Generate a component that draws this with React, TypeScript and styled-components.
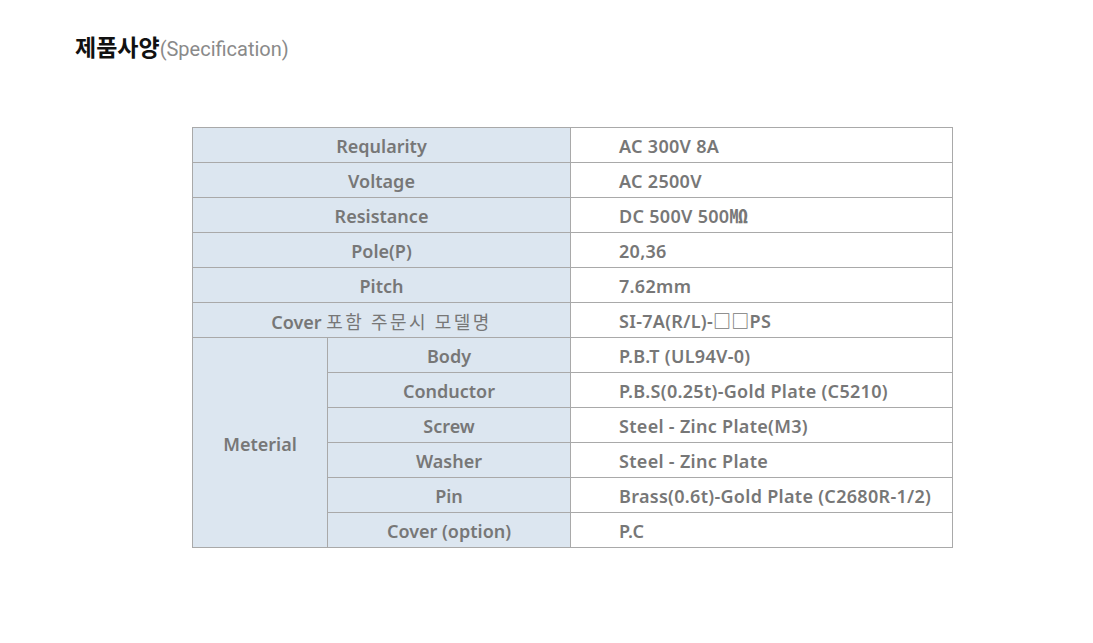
import React from "react";
import styled, { createGlobalStyle } from "styled-components";

const Global = createGlobalStyle`
  html, body { margin: 0; padding: 0; background: #fff; }
  body { font-family: "Noto Sans", "Noto Sans CJK KR", sans-serif; }
`;

const Page = styled.div`
  padding: 31px 0 0 75px;
`;

const Title = styled.h2`
  margin: 0;
  font-size: 23px;
  font-weight: 700;
  color: #111;
  font-family: "Noto Sans CJK KR", sans-serif;
  line-height: 30px;
`;

const Sub = styled.span`
  font-size: 20px;
  font-weight: 400;
  color: #8a8a8a;
  font-family: "Roboto", "Noto Sans", sans-serif;
`;

const Table = styled.table`
  margin: 63px 0 0 117px;
  border-collapse: collapse;
  width: 761px;
  table-layout: fixed;
  font-size: 18px;
  font-weight: 600;
  color: #777;
`;

const Cell = styled.td<{ $head?: boolean }>`
  height: 32px;
  padding: 2px 0 0 ${(p) => (p.$head ? "0" : "48px")};
  border: 1px solid #a9a9a9;
  background: ${(p) => (p.$head ? "#dce6f0" : "#fff")};
  text-align: ${(p) => (p.$head ? "center" : "left")};
  letter-spacing: ${(p) => (p.$head ? "0" : "0.3px")};
  vertical-align: middle;
  white-space: nowrap;
  line-height: 20px;
`;

const Ko = styled.span`
  font-family: "Noto Sans CJK KR", sans-serif;
  font-weight: 400;
  letter-spacing: 2.5px;
`;

const simple: [React.ReactNode, React.ReactNode][] = [
  ["Reqularity", "AC 300V 8A"],
  ["Voltage", "AC 2500V"],
  ["Resistance", "DC 500V 500㏁"],
  ["Pole(P)", "20,36"],
  ["Pitch", "7.62mm"],
  [
    <>
      Cover <Ko>포함 주문시 모델명</Ko>
    </>,
    "SI-7A(R/L)-□□PS",
  ],
];

const material: [string, string][] = [
  ["Body", "P.B.T (UL94V-0)"],
  ["Conductor", "P.B.S(0.25t)-Gold Plate (C5210)"],
  ["Screw", "Steel - Zinc Plate(M3)"],
  ["Washer", "Steel - Zinc Plate"],
  ["Pin", "Brass(0.6t)-Gold Plate (C2680R-1/2)"],
  ["Cover (option)", "P.C"],
];

export default function App() {
  return (
    <Page>
      <Global />
      <Title>
        제품사양<Sub>(Specification)</Sub>
      </Title>
      <Table>
        <colgroup>
          <col style={{ width: 135 }} />
          <col style={{ width: 243 }} />
          <col style={{ width: 382 }} />
        </colgroup>
        <tbody>
          {simple.map(([k, v], i) => (
            <tr key={i}>
              <Cell $head colSpan={2}>{k}</Cell>
              <Cell>{v}</Cell>
            </tr>
          ))}
          {material.map(([k, v], i) => (
            <tr key={k}>
              {i === 0 && (
                <Cell $head rowSpan={material.length}>Meterial</Cell>
              )}
              <Cell $head>{k}</Cell>
              <Cell>{v}</Cell>
            </tr>
          ))}
        </tbody>
      </Table>
    </Page>
  );
}
